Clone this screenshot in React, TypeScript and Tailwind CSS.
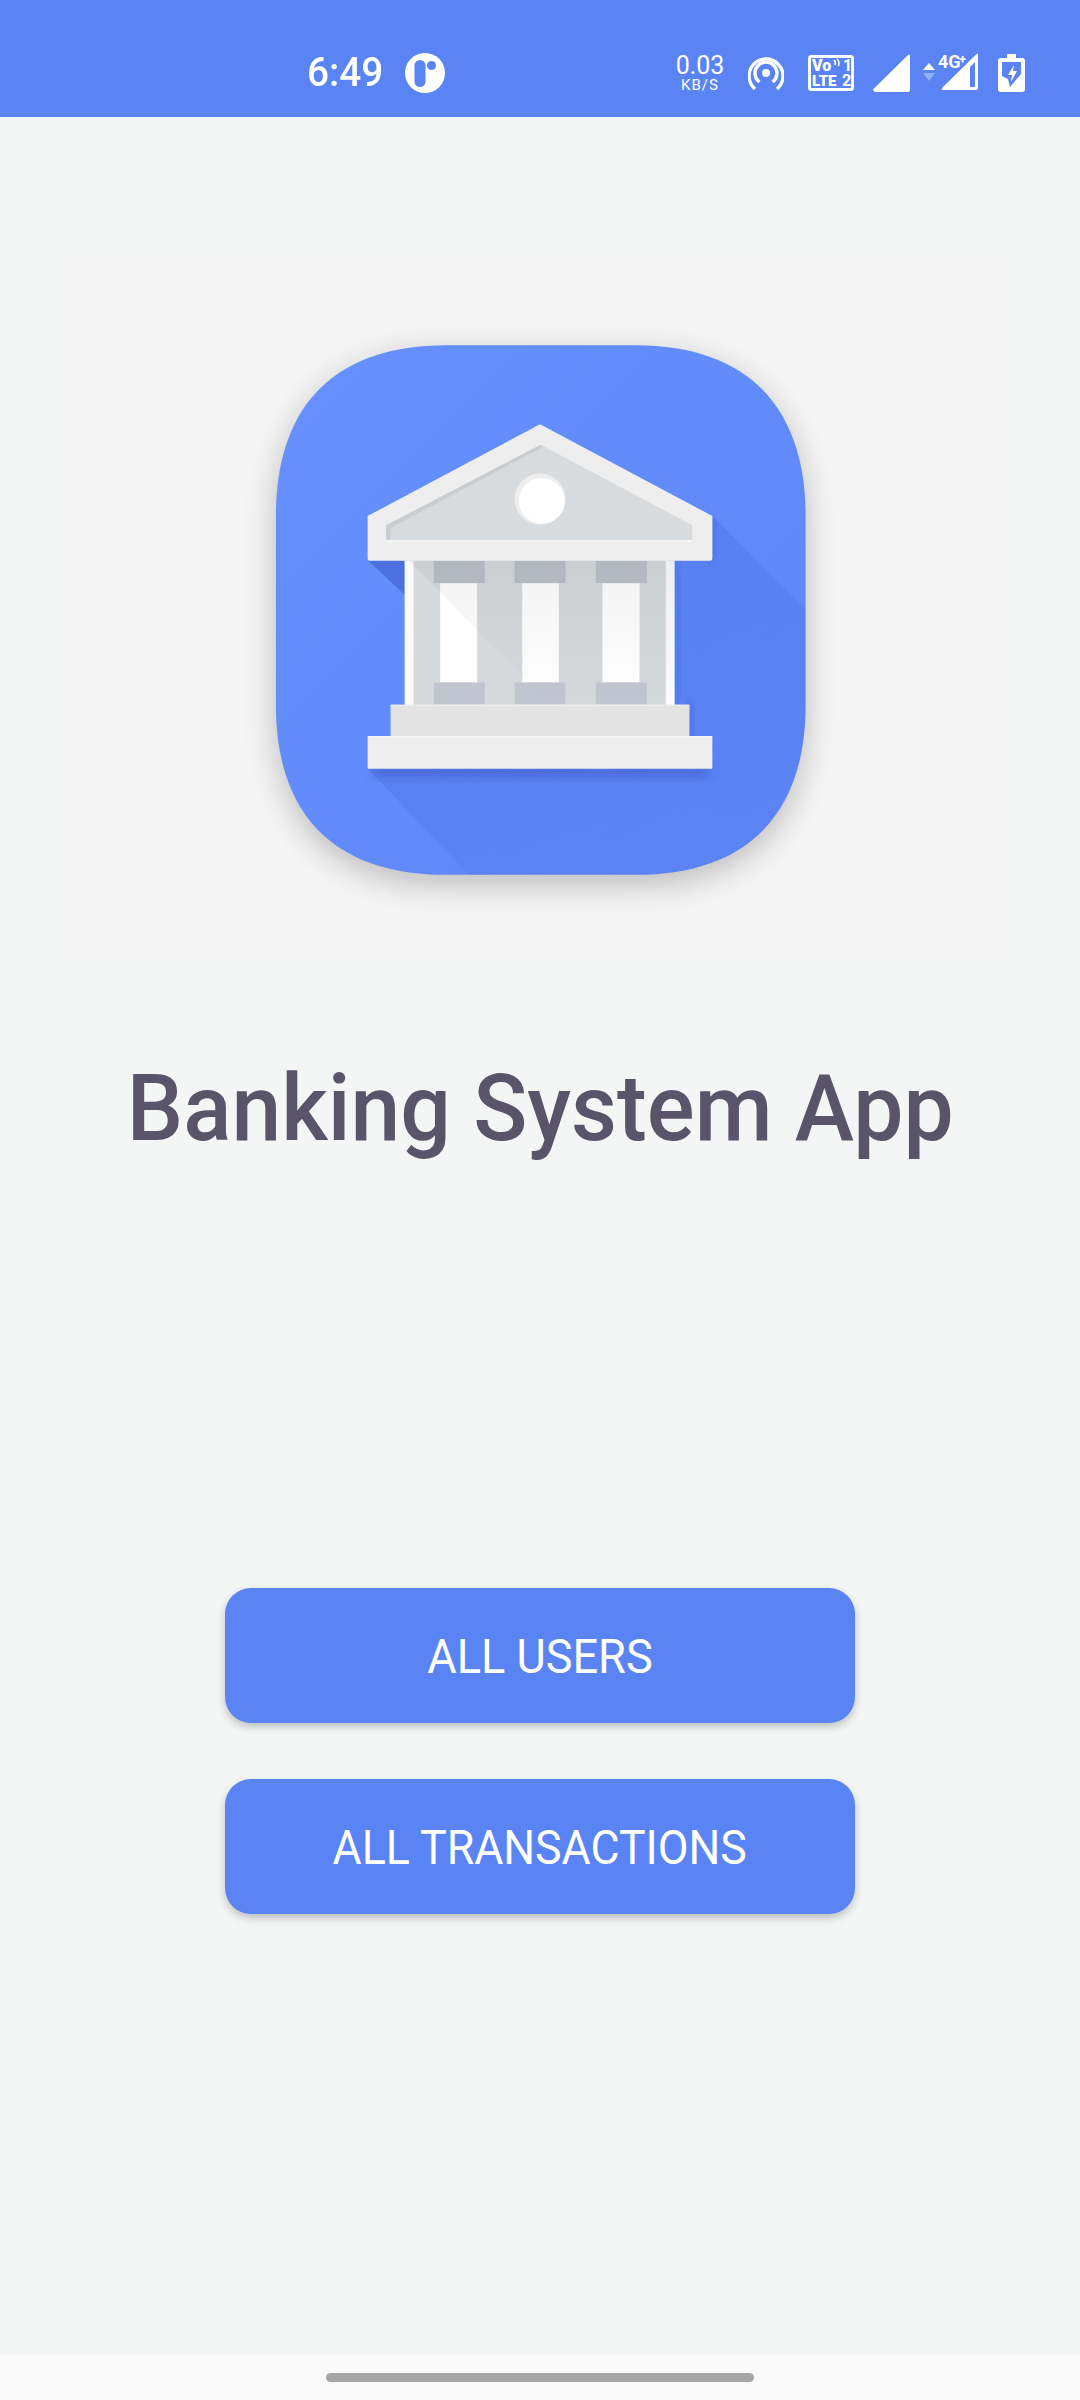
export default function App() {
  return (
    <div className="flex flex-col w-[1080px] h-[2400px] bg-[#f4f6f6] font-['Roboto',sans-serif] overflow-hidden">
      <StatusBar />
      <main className="flex flex-col items-center flex-1">
        <div className="mt-[138px] w-[940px] h-[700px] shrink-0 bg-[#f5f5f5] flex justify-center pt-[65px]">
          <BankIcon />
        </div>
        <h1 className="mt-[94px] text-[93px] leading-[120px] font-medium text-[#5a546b] whitespace-nowrap scale-x-[0.961]">Banking System App</h1>
        <div className="mt-[419px] flex flex-col gap-[56px]">
          <button className="w-[630px] h-[135px] rounded-[26px] bg-[#5a84f4] text-white shadow-[0_4px_8px_rgba(0,0,0,0.22)]">
            <span className="inline-block text-[48px] leading-none font-normal scale-x-[0.94] whitespace-nowrap translate-y-[1px]">ALL USERS</span>
          </button>
          <button className="w-[630px] h-[135px] rounded-[26px] bg-[#5a84f4] text-white shadow-[0_4px_8px_rgba(0,0,0,0.22)]">
            <span className="inline-block text-[48px] leading-none font-normal scale-x-[0.93] whitespace-nowrap translate-y-[1px]">ALL TRANSACTIONS</span>
          </button>
        </div>
      </main>
      <div className="h-[45px] bg-[#fafafa] flex justify-center pt-[18px] shrink-0">
        <div className="w-[428px] h-[9px] rounded-full bg-[#a5a5a5]" />
      </div>
    </div>
  );
}

function StatusBar() {
  return (
    <div className="h-[117px] shrink-0 bg-[#5a84f4] flex items-center pl-[307px] pt-[29px] text-white">
      <span className="text-[40px] leading-none font-medium w-[76px] whitespace-nowrap scale-x-[0.97] origin-left">6:49</span>
      <svg width="40" height="40" viewBox="0 0 40 40" className="ml-[22px]">
        <circle cx="20" cy="20" r="20" fill="#fff" />
        <rect x="9.500" y="7" width="11" height="27" rx="5.500" fill="#5a84f4" />
        <circle cx="26.500" cy="12.500" r="4.500" fill="#5a84f4" />
      </svg>
      <div className="ml-[233px] w-[44px] flex flex-col items-center text-center">
        <span className="text-[25px] leading-[24px] font-normal">0.03</span>
        <span className="text-[15px] leading-[14px] font-normal tracking-[1px]">KB/S</span>
      </div>
      <svg width="36" height="36" viewBox="0 0 36 36" className="ml-[26px]" fill="none" stroke="#fff" strokeWidth="3.4">
        <circle cx="18" cy="18" r="4" fill="#fff" stroke="none" />
        <path d="M11.500 27 A11 11 0 1 1 24.500 27" />
        <path d="M7 34 A17 17 0 1 1 29 34" />
      </svg>
      <svg width="46" height="36" viewBox="0 0 46 36" className="ml-[24px]">
        <rect x="1.500" y="1.500" width="43" height="33" rx="2" fill="none" stroke="#fff" strokeWidth="3" />
        <text x="4" y="16" fontSize="16" fontWeight="900" fill="#fff" fontFamily="Roboto, sans-serif">Vo</text>
        <path d="M26 5 q2 2 1 5 M29 4 q3 3 1.500 7" stroke="#fff" strokeWidth="1.6" fill="none" />
        <text x="35" y="16" fontSize="16" fontWeight="700" fill="#fff" fontFamily="Roboto, sans-serif">1</text>
        <text x="4" y="31" fontSize="15" fontWeight="900" fill="#fff" fontFamily="Roboto, sans-serif">LTE</text>
        <text x="34" y="31" fontSize="16" fontWeight="700" fill="#fff" fontFamily="Roboto, sans-serif">2</text>
      </svg>
      <svg width="37" height="38" viewBox="0 0 37 38" className="ml-[19px]">
        <path d="M0.500 35 L35 1 Q37 -0.500 37 2 L37 36 Q37 38 35 38 L2 38 Q-0.500 37 0.500 35 Z" fill="#fff" />
      </svg>
      <svg width="57" height="40" viewBox="0 0 57 40" className="ml-[11px] overflow-visible">
        <path d="M2 17 L8 10 L14 17 Z" fill="#fff" />
        <path d="M2 20 L14 20 L8 28 Z" fill="#fff" fillOpacity="0.35" />
        <text x="17" y="15" fontSize="18" fontWeight="700" fill="#fff" fontFamily="Roboto, sans-serif">4G</text>
        <text x="38" y="11" fontSize="13" fontWeight="700" fill="#fff" fontFamily="Roboto, sans-serif">+</text>
        <path d="M21 35 L55 1.500 Q57 0 57 2 L57 35 Q57 37 55 37 L23 37 Q20 37 21 35 Z M49 14 L49 34 L54 34 L54 9 Z" fill="#fff" fillRule="evenodd" />
      </svg>
      <svg width="27" height="38" viewBox="0 0 27 38" className="ml-[20px]">
        <path d="M9 0 H18 V4 H24 Q27 4 27 7 V35 Q27 38 24 38 H3 Q0 38 0 35 V7 Q0 4 3 4 H9 Z M4 8 V22 L10 25 L12 33 L23 20 V8 Z M16 11 L10 21 H14 L13 28 L19 17 H15 Z" fill="#fff" fillRule="evenodd" />
      </svg>
    </div>
  );
}

function BankIcon() {
  const squircle =
    "M530 68 L1042 68 C1340 68 1502 230 1502 530 L1502 1040 C1502 1340 1340 1500 1042 1500 L530 1500 C230 1500 70 1340 70 1040 L70 530 C70 230 230 68 530 68 Z";
  return (
    <svg width="580" height="580" viewBox="0 0 1568 1568" className="block overflow-visible">
      <defs>
        <linearGradient id="bg" x1="0" y1="0" x2="1" y2="1">
          <stop offset="0" stopColor="#6791ff" />
          <stop offset="1" stopColor="#5c85f6" />
        </linearGradient>
        <linearGradient id="long" x1="0.2" y1="0.1" x2="0.8" y2="0.9">
          <stop offset="0" stopColor="#3f60d0" stopOpacity="0.3" />
          <stop offset="1" stopColor="#3f60d0" stopOpacity="0.08" />
        </linearGradient>
        <linearGradient id="fade" x1="0" y1="0" x2="0" y2="1">
          <stop offset="0" stopColor="#000" stopOpacity="0.05" />
          <stop offset="1" stopColor="#000" stopOpacity="0" />
        </linearGradient>
        <clipPath id="sq">
          <path d={squircle} />
        </clipPath>
        <filter id="outer" x="-25%" y="-25%" width="150%" height="150%">
          <feGaussianBlur stdDeviation="44" />
        </filter>
        <filter id="soft" x="-20%" y="-50%" width="140%" height="200%">
          <feGaussianBlur stdDeviation="14" />
        </filter>
      </defs>
      <path d={squircle} fill="#000" fillOpacity="0.24" filter="url(#outer)" transform="translate(0 26)" />
      <path d={squircle} fill="url(#bg)" />
      <g clipPath="url(#sq)">
        <path d="M1250 530 L1540 820 L1540 1540 L630 1540 L318 1213 L418 1213 L418 742 L318 650 L1250 650 Z" fill="url(#long)" />
        <path d="M320 650 L420 650 L420 745 Z" fill="#3f60d0" fillOpacity="0.45" />
        <rect x="330" y="1205" width="910" height="30" fill="#2c46a8" fillOpacity="0.4" filter="url(#soft)" />
        <rect x="1180" y="1040" width="18" height="90" fill="#2c46a8" fillOpacity="0.35" filter="url(#soft)" />
        <rect x="1148" y="650" width="14" height="390" fill="#2c46a8" fillOpacity="0.2" filter="url(#soft)" />
        <rect x="1240" y="540" width="18" height="110" fill="#2c46a8" fillOpacity="0.3" filter="url(#soft)" />
      </g>
      <rect x="418" y="650" width="730" height="392" fill="#fbfbfd" />
      <rect x="442" y="650" width="682" height="392" fill="#d6d9db" />
      <rect x="514" y="712" width="100" height="268" fill="#ffffff" />
      <rect x="736" y="712" width="99" height="268" fill="#ffffff" />
      <rect x="953" y="712" width="100" height="268" fill="#ffffff" />
      {[497, 715, 935].map((x) => (
        <g key={x}>
          <rect x={x} y="650" width="138" height="61" fill="#bcc0c8" />
          <rect x={x} y="980" width="138" height="60" fill="#c0c5cf" />
        </g>
      ))}
      <path d="M430 650 L1148 650 L1148 1040 L810 1040 Z" fill="url(#fade)" />
      <path d="M318 530 L784 282 L1250 530 L1250 645 Q1250 651 1244 651 L324 651 Q318 651 318 645 Z" fill="#eeeeee" />
      <path d="M368 555 L786 337 L1196 555 L1196 597 L368 597 Z" fill="#d8dbde" />
      <path d="M368 555 L786 337 L792 343 L380 562 L380 597 L368 597 Z" fill="#c9cdd0" />
      <rect x="368" y="595" width="828" height="6" fill="#f7f7f7" />
      <circle cx="784" cy="484" r="69" fill="#eeeeee" />
      <circle cx="789" cy="489" r="62" fill="#ffffff" />
      <rect x="380" y="1040" width="808" height="86" rx="3" fill="#e3e3e3" />
      <rect x="380" y="1040" width="808" height="3" fill="#f0f0f0" />
      <rect x="318" y="1125" width="932" height="88" rx="2" fill="#eeeeee" />
      <rect x="318" y="1125" width="932" height="3" fill="#fafafa" />
    </svg>
  );
}
